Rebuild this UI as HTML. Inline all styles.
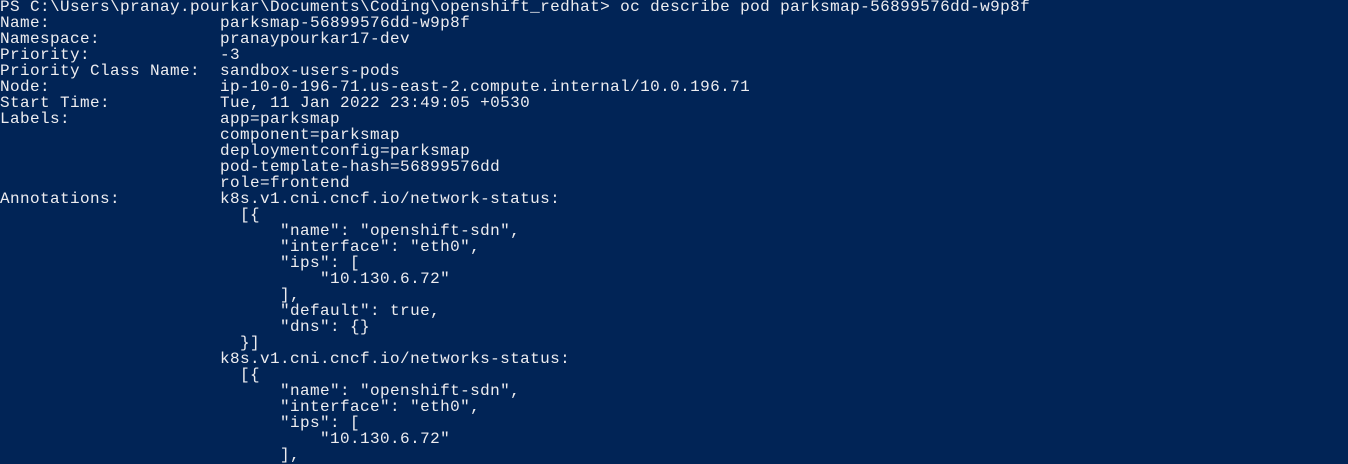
<!DOCTYPE html>
<html><head><meta charset="utf-8"><style>
html,body{margin:0;padding:0;background:#012456;width:1348px;height:461px;overflow:hidden}
pre{margin:0;padding:0;position:absolute;left:0;top:-1px;font-family:"Liberation Mono",monospace;font-size:16px;letter-spacing:0.4px;line-height:16px;color:#eeedf0;white-space:pre}
</style></head><body><pre>PS C:\Users\pranay.pourkar\Documents\Coding\openshift_redhat> oc describe pod parksmap-56899576dd-w9p8f
Name:                 parksmap-56899576dd-w9p8f
Namespace:            pranaypourkar17-dev
Priority:             -3
Priority Class Name:  sandbox-users-pods
Node:                 ip-10-0-196-71.us-east-2.compute.internal/10.0.196.71
Start Time:           Tue, 11 Jan 2022 23:49:05 +0530
Labels:               app=parksmap
                      component=parksmap
                      deploymentconfig=parksmap
                      pod-template-hash=56899576dd
                      role=frontend
Annotations:          k8s.v1.cni.cncf.io/network-status:
                        [{
                            "name": "openshift-sdn",
                            "interface": "eth0",
                            "ips": [
                                "10.130.6.72"
                            ],
                            "default": true,
                            "dns": {}
                        }]
                      k8s.v1.cni.cncf.io/networks-status:
                        [{
                            "name": "openshift-sdn",
                            "interface": "eth0",
                            "ips": [
                                "10.130.6.72"
                            ],
</pre></body></html>
